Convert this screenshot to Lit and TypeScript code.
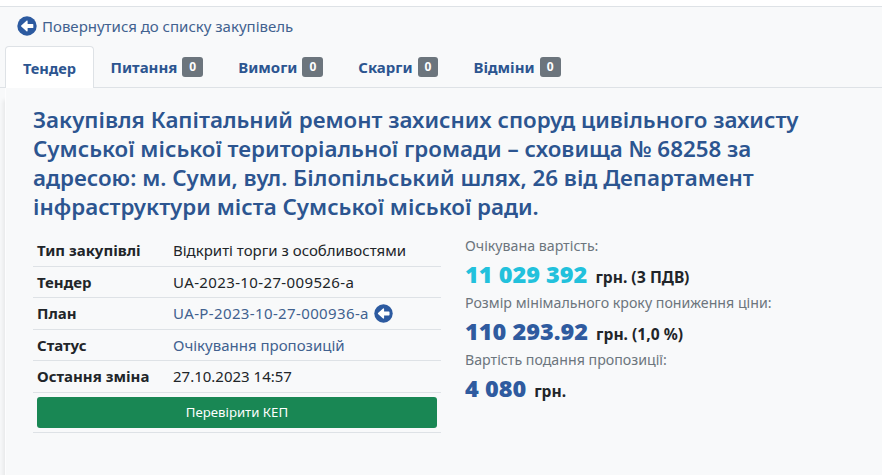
import { LitElement, html, css } from 'lit';
import { customElement } from 'lit/decorators.js';

const backIcon = html`<svg class="back" viewBox="0 0 512 512"><path fill="#2c5aa0" d="M256 8a248 248 0 1 0 0 496 248 248 0 1 0 0-496z"/><path fill="#fff" d="M244 122c5-5 12-6 18-4 6 3 10 9 10 15v71h130c9 0 16 7 16 16v72c0 9-7 16-16 16H272v71c0 6-4 12-10 15-6 2-13 1-18-4L108 267c-6-6-6-16 0-22z"/></svg>`;

@customElement('app-root')
export class AppRoot extends LitElement {
  static styles = css`
    :host {
      display: block;
      height: 475px;
      overflow: hidden;
      background: #fff;
      font-family: 'Noto Sans', 'Open Sans', sans-serif;
      font-size: 15px;
      color: #212529;
    }
    .page {
      margin-top: 6px;
      height: 469px;
      background: #f8f9fa;
      border-top: 1px solid #dee2e6;
      box-sizing: border-box;
      overflow: hidden;
    }
    .back-link {
      display: flex;
      align-items: center;
      gap: 5px;
      height: 39px;
      padding: 0 0 1px 17px;
      box-sizing: border-box;
      color: #41618f;
    }
    .back {
      width: 20px;
      height: 20px;
      flex: none;
    }
    .tabs {
      display: flex;
      height: 42px;
      padding-left: 5px;
      border-bottom: 1px solid #dee2e6;
      box-sizing: border-box;
    }
    .tab {
      display: flex;
      align-items: center;
      gap: 5px;
      padding: 0 17.5px;
      font-weight: 700;
      color: #2c5590;
    }
    .tab.active {
      padding: 0 17px;
      margin-right: -1px;
      font-size: 14.6px;
      background: #fff;
      border: 1px solid #dee2e6;
      border-bottom: 0;
      border-radius: 4px 4px 0 0;
      height: 42px;
      box-sizing: border-box;
    }
    .badge {
      display: block;
      background: #6c757d;
      color: #fff;
      font-size: 12px;
      line-height: 20px;
      height: 20px;
      padding: 0 7px;
      border-radius: 3px;
    }
    .content {
      margin-left: 5px;
      height: 400px;
      padding: 17px 33px 0 27px;
      border-left: 1px solid #fdfdfe;
      box-shadow: -2px 12px 4px 0 rgba(0, 0, 0, 0.07);
    }
    h1 {
      margin: 0 0 14px;
      font-size: 22.35px;
      line-height: 29px;
      font-weight: 600;
      color: #2c5590;
      max-width: 790px;
    }
    .columns {
      display: flex;
      gap: 24px;
    }
    .info {
      width: 408px;
      flex: none;
    }
    .row {
      display: flex;
      align-items: center;
      height: 31.5px;
      padding-left: 4px;
      border-bottom: 1px solid #dee2e6;
      box-sizing: border-box;
    }
    .row b {
      width: 136px;
      flex: none;
      color: #212529;
    }
    .row span {
      display: flex;
      align-items: center;
      gap: 5px;
    }
    .row .code {
      letter-spacing: 0.37px;
    }
    .row .link {
      color: #41618f;
    }
    .row .back {
      width: 19px;
      height: 19px;
    }
    .action {
      padding: 4px;
      border-bottom: 1px solid #dee2e6;
    }
    button {
      display: block;
      width: 100%;
      height: 31px;
      border: 0;
      border-radius: 3px;
      background: #198754;
      color: #fff;
      font: 13.2px 'Noto Sans', sans-serif;
    }
    .prices {
      padding-top: 1px;
    }
    .label {
      color: #6c757d;
      font-size: 14.2px;
      line-height: 20px;
    }
    .amount {
      display: flex;
      align-items: baseline;
      gap: 8px;
      height: 37px;
      line-height: 37px;
      font-size: 15.6px;
      font-weight: 700;
    }
    .amount strong {
      font-size: 23.5px;
      color: #2f5b9f;
    }
    .amount strong.cyan {
      color: #22c1dc;
    }
  `;

  render() {
    const tabs = ['Питання', 'Вимоги', 'Скарги', 'Відміни'];
    return html`
      <div class="page">
        <div class="back-link">${backIcon}Повернутися до списку закупівель</div>
        <div class="tabs">
          <div class="tab active">Тендер</div>
          ${tabs.map((t) => html`<div class="tab">${t}<span class="badge">0</span></div>`)}
        </div>
        <div class="content">
          <h1>Закупівля Капітальний ремонт захисних споруд цивільного захисту Сумської міської територіальної громади – сховища № 68258 за адресою: м. Суми, вул. Білопільський шлях, 26 від Департамент інфраструктури міста Сумської міської ради.</h1>
          <div class="columns">
            <div class="info">
              <div class="row"><b>Тип закупівлі</b><span>Відкриті торги з особливостями</span></div>
              <div class="row"><b>Тендер</b><span class="code">UA-2023-10-27-009526-a</span></div>
              <div class="row"><b>План</b><span class="link"><span class="code">UA-P-2023-10-27-000936-a</span> ${backIcon}</span></div>
              <div class="row"><b>Статус</b><span class="link">Очікування пропозицій</span></div>
              <div class="row"><b>Остання зміна</b><span>27.10.2023 14:57</span></div>
              <div class="action"><button>Перевірити КЕП</button></div>
            </div>
            <div class="prices">
              <div class="label">Очікувана вартість:</div>
              <div class="amount"><strong class="cyan">11 029 392</strong>грн. (З ПДВ)</div>
              <div class="label">Розмір мінімального кроку пониження ціни:</div>
              <div class="amount"><strong>110 293.92</strong>грн. (1,0 %)</div>
              <div class="label">Вартість подання пропозиції:</div>
              <div class="amount"><strong>4 080</strong>грн.</div>
            </div>
          </div>
        </div>
      </div>
    `;
  }
}
